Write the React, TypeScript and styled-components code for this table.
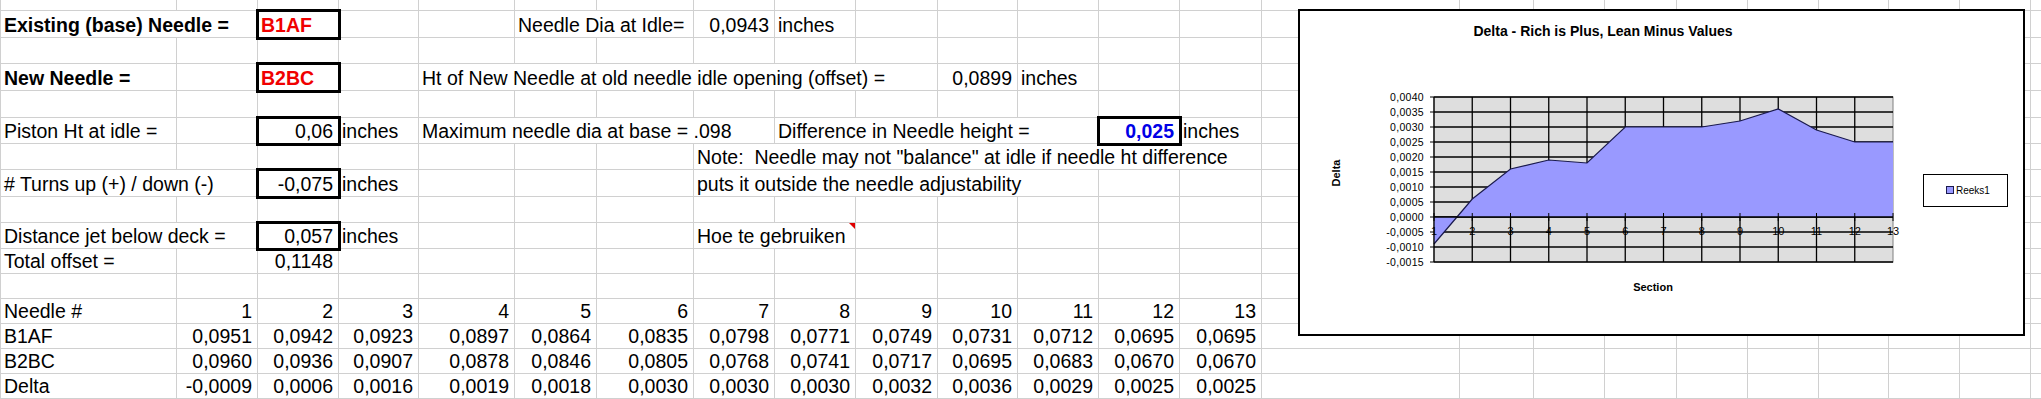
import React from 'react';
import styled, { createGlobalStyle, css } from 'styled-components';

const GRID = '#d0d0d0';

const colWidths = [176, 81, 81, 80, 96, 82, 97, 81, 81, 82, 80, 81, 81, 82, 198, 74, 71, 72, 71, 71, 70, 71, 71, 40];
const rowHeights = [11, 27, 26, 27, 27, 26, 26, 27, 26, 26, 25, 25, 25, 25, 25, 25];

type CellSpec = {
  col: number;
  text: string;
  span?: number;
  align?: 'left' | 'right';
  bold?: boolean;
  color?: string;
  boxed?: boolean;
  comment?: boolean;
};

const RED = '#f00000';
const BLUE = '#0000e6';

const numberRow = (label: string, values: string[]): CellSpec[] => [
  { col: 0, text: label },
  ...values.map((v, i) => ({ col: i + 1, text: v, align: 'right' as const })),
];

const b1af = ['0,0951', '0,0942', '0,0923', '0,0897', '0,0864', '0,0835', '0,0798', '0,0771', '0,0749', '0,0731', '0,0712', '0,0695', '0,0695'];
const b2bc = ['0,0960', '0,0936', '0,0907', '0,0878', '0,0846', '0,0805', '0,0768', '0,0741', '0,0717', '0,0695', '0,0683', '0,0670', '0,0670'];
const delta = ['-0,0009', '0,0006', '0,0016', '0,0019', '0,0018', '0,0030', '0,0030', '0,0030', '0,0032', '0,0036', '0,0029', '0,0025', '0,0025'];
const deltaValues = [-9, 6, 16, 19, 18, 30, 30, 30, 32, 36, 29, 25, 25];

const sheetRows: Record<number, CellSpec[]> = {
  1: [
    { col: 0, text: 'Existing (base) Needle =', span: 2, bold: true },
    { col: 2, text: 'B1AF', bold: true, color: RED, boxed: true },
    { col: 5, text: 'Needle Dia at Idle=', span: 2 },
    { col: 7, text: '0,0943', align: 'right' },
    { col: 8, text: 'inches' },
  ],
  3: [
    { col: 0, text: 'New Needle =', bold: true },
    { col: 2, text: 'B2BC', bold: true, color: RED, boxed: true },
    { col: 4, text: 'Ht of New Needle at old needle idle opening (offset) =', span: 6 },
    { col: 10, text: '0,0899', align: 'right' },
    { col: 11, text: 'inches' },
  ],
  5: [
    { col: 0, text: 'Piston Ht at idle =' },
    { col: 2, text: '0,06', align: 'right', boxed: true },
    { col: 3, text: 'inches' },
    { col: 4, text: 'Maximum needle dia at base = .098', span: 4 },
    { col: 8, text: 'Difference in Needle height =', span: 4 },
    { col: 12, text: '0,025', align: 'right', bold: true, color: BLUE, boxed: true },
    { col: 13, text: 'inches' },
  ],
  6: [{ col: 7, text: 'Note:  Needle may not "balance" at idle if needle ht difference', span: 7 }],
  7: [
    { col: 0, text: '# Turns up (+) / down (-)', span: 2 },
    { col: 2, text: '-0,075', align: 'right', boxed: true },
    { col: 3, text: 'inches' },
    { col: 7, text: 'puts it outside the needle adjustability', span: 5 },
  ],
  9: [
    { col: 0, text: 'Distance jet below deck =', span: 2 },
    { col: 2, text: '0,057', align: 'right', boxed: true },
    { col: 3, text: 'inches' },
    { col: 7, text: 'Hoe te gebruiken', span: 2, comment: true },
  ],
  10: [
    { col: 0, text: 'Total offset =' },
    { col: 2, text: '0,1148', align: 'right' },
  ],
  12: numberRow('Needle #', Array.from({ length: 13 }, (_, i) => String(i + 1))),
  13: numberRow('B1AF', b1af),
  14: numberRow('B2BC', b2bc),
  15: numberRow('Delta', delta),
};

const GlobalStyle = createGlobalStyle`
  html, body {
    margin: 0;
    padding: 0;
    background: #ffffff;
    overflow: hidden;
  }
  body {
    font-family: 'Liberation Sans', Arial, sans-serif;
    color: #000;
  }
`;

const Sheet = styled.div`
  position: relative;
  display: grid;
  grid-template-columns: ${colWidths.map((w) => `${w}px`).join(' ')};
  grid-template-rows: ${rowHeights.map((h) => `${h}px`).join(' ')};
  border-left: 1px solid ${GRID};
  width: max-content;
  font-size: 19.5px;
`;

const Cell = styled.div<{
  $span: number;
  $align?: 'left' | 'right';
  $bold?: boolean;
  $color?: string;
  $boxed?: boolean;
  $comment?: boolean;
}>`
  grid-column: span ${(p) => p.$span};
  position: relative;
  display: flex;
  align-items: flex-end;
  justify-content: ${(p) => (p.$align === 'right' ? 'flex-end' : 'flex-start')};
  padding: 0 5px 0 3px;
  border-right: 1px solid ${GRID};
  border-bottom: 1px solid ${GRID};
  white-space: pre;
  min-width: 0;
  line-height: normal;
  font-weight: ${(p) => (p.$bold ? 700 : 400)};
  color: ${(p) => p.$color ?? '#000'};

  ${(p) =>
    p.$boxed &&
    css`
      outline: 3px solid #000;
      outline-offset: -1px;
      z-index: 1;
    `}

  ${(p) =>
    p.$comment &&
    css`
      &::after {
        content: '';
        position: absolute;
        top: 0;
        right: 0;
        border-top: 6px solid #e00000;
        border-left: 6px solid transparent;
      }
    `}
`;

const ChartFrame = styled.div`
  position: absolute;
  left: 1297px;
  top: 9px;
  width: 723px;
  height: 323px;
  border: 2px solid #000;
  background: #fff;
  z-index: 2;
`;

// plot geometry, relative to the chart's inner corner
const PX = 134;
const PY = 86;
const STEP_X = 38.25;
const STEP_Y = 15;
const px = (i: number) => PX + i * STEP_X;
const py = (tenThousandths: number) => PY + ((40 - tenThousandths) / 5) * STEP_Y;
const ZERO = py(0);

const yLabel = (n: number) => {
  const v = Math.abs(n * 5);
  return `${n < 0 ? '-' : ''}0,${String(v).padStart(4, '0')}`;
};

const DeltaChart = () => {
  const right = px(12);
  const bottom = py(-15);
  const line = deltaValues.map((v, i) => `${px(i)},${py(v)}`).join(' ');
  const area = `${line} ${right},${ZERO} ${px(0)},${ZERO}`;

  return (
    <ChartFrame>
      <svg width="723" height="323" viewBox="0 0 723 323" fontFamily="'Liberation Sans', Arial, sans-serif">
        <text x="303" y="25" fontSize="14" fontWeight="700" textAnchor="middle">
          Delta - Rich is Plus, Lean Minus Values
        </text>

        <rect x={PX} y={PY} width={right - PX} height={bottom - PY} fill="#dedede" stroke="#808080" />
        {Array.from({ length: 12 }, (_, k) => (
          <line key={`h${k}`} x1={PX} x2={right} y1={PY + k * STEP_Y} y2={PY + k * STEP_Y} stroke="#000" strokeWidth="1.3" />
        ))}
        {Array.from({ length: 11 }, (_, i) => (
          <line key={`v${i}`} x1={px(i + 1)} x2={px(i + 1)} y1={PY} y2={bottom} stroke="#000" strokeWidth="1.3" />
        ))}

        <polygon points={area} fill="#9999ff" />
        <polyline points={line} fill="none" stroke="#1a1a4d" strokeWidth="1.2" />

        <line x1={PX} x2={right} y1={ZERO} y2={ZERO} stroke="#000" strokeWidth="1.5" />
        <line x1={PX} x2={PX} y1={PY} y2={bottom} stroke="#000" strokeWidth="1.3" />
        {Array.from({ length: 13 }, (_, i) => (
          <line key={`t${i}`} x1={px(i)} x2={px(i)} y1={ZERO - 4} y2={ZERO + 4} stroke="#000" />
        ))}
        {Array.from({ length: 12 }, (_, k) => (
          <line key={`yt${k}`} x1={PX - 4} x2={PX} y1={PY + k * STEP_Y} y2={PY + k * STEP_Y} stroke="#000" />
        ))}

        {Array.from({ length: 12 }, (_, k) => (
          <text key={`yl${k}`} x="124" y={PY + k * STEP_Y + 4} fontSize="10.5" textAnchor="end" letterSpacing="0.3">
            {yLabel(8 - k)}
          </text>
        ))}
        {Array.from({ length: 13 }, (_, i) => (
          <text key={`xl${i}`} x={px(i)} y={ZERO + 18} fontSize="11" textAnchor="middle" fill="#000">
            {i + 1}
          </text>
        ))}

        <text x="0" y="0" fontSize="11" fontWeight="700" textAnchor="middle" transform="translate(40 162) rotate(-90)">
          Delta
        </text>
        <text x="353" y="280" fontSize="11" fontWeight="700" textAnchor="middle">
          Section
        </text>

        <rect x="623.5" y="163.5" width="84" height="32" fill="#fff" stroke="#000" />
        <rect x="646.5" y="175.5" width="7" height="7" fill="#9999ff" stroke="#1a1a4d" />
        <text x="656" y="183" fontSize="10">
          Reeks1
        </text>
      </svg>
    </ChartFrame>
  );
};

const renderRow = (r: number) => {
  const specs = sheetRows[r] ?? [];
  const cells: React.ReactNode[] = [];
  let c = 0;
  while (c < colWidths.length) {
    const spec = specs.find((s) => s.col === c);
    if (spec) {
      const span = spec.span ?? 1;
      cells.push(
        <Cell
          key={`${r}-${c}`}
          $span={span}
          $align={spec.align}
          $bold={spec.bold}
          $color={spec.color}
          $boxed={spec.boxed}
          $comment={spec.comment}
        >
          {spec.text}
        </Cell>
      );
      c += span;
    } else {
      cells.push(<Cell key={`${r}-${c}`} $span={1} />);
      c += 1;
    }
  }
  return cells;
};

const App = () => (
  <>
    <GlobalStyle />
    <Sheet>
      {rowHeights.map((_, r) => renderRow(r))}
      <DeltaChart />
    </Sheet>
  </>
);

export default App;
